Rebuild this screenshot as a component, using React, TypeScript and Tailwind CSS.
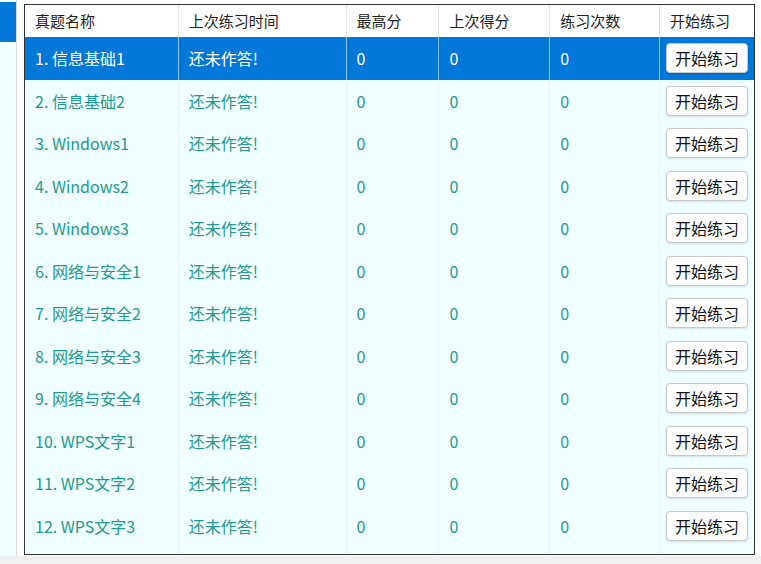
const cols = [154, 168, 93, 111, 110, 94];
const names = ["1. 信息基础1","2. 信息基础2","3. Windows1","4. Windows2","5. Windows3","6. 网络与安全1","7. 网络与安全2","8. 网络与安全3","9. 网络与安全4","10. WPS文字1","11. WPS文字2","12. WPS文字3",""];
const heads = ["真题名称","上次练习时间","最高分","上次得分","练习次数","开始练习"];
export default function App() {
  return (
    <div className="w-[761px] h-[564px] bg-[#f0f0f0] flex flex-col overflow-hidden" style={{fontFamily:'"Noto Sans CJK SC","Noto Sans",sans-serif'}}>
      <div className="flex h-[556px] bg-white">
        <div className="w-[17px] bg-[#f0ffff] border-r border-[#d8d8d8]">
          <div className="h-[40px] mt-[2px] bg-[#0078d7]"></div>
        </div>
        <div className="w-[7px]"></div>
        <div className="mt-[4px] h-[551px] w-[731px] border border-[#333] overflow-hidden bg-[#f0ffff]">
          <div className="flex h-[32px] bg-white text-[15px] text-[#222]">
            {heads.map((h,i)=>(
              <div key={i} style={{width:cols[i]}} className="flex items-center pl-[10px] border-r border-[#e8e8e8] last:border-r-0">{h}</div>
            ))}
          </div>
          {names.map((n,r)=>{
            const sel = r===0;
            const vals = [n, n ? "还未作答!" : "", n?"0":"", n?"0":"", n?"0":""];
            return (
              <div key={r} className={`flex h-[42.5px] text-[16px] ${sel?"bg-[#0078d7] text-white":"text-[#1f9a8c]"}`}>
                {vals.map((v,i)=>(
                  <div key={i} style={{width:cols[i]}} className={`flex items-center pl-[10px] border-r ${sel?"border-[#8fc3ee]":"border-[#e4f6f6]"}`}>{v}</div>
                ))}
                <div style={{width:cols[5]}} className="flex items-center pl-[6px]">
                  {n && <button className="h-[30px] w-[82px] bg-white border border-[#c8c8c8] rounded-[4px] text-[16px] text-[#111] shadow-sm">开始练习</button>}
                  {!n && <div className="h-[30px] w-[82px] mt-[14px] bg-white border border-[#c8c8c8] rounded-[4px]"></div>}
                </div>
              </div>
            );
          })}
        </div>
      </div>
    </div>
  );
}
